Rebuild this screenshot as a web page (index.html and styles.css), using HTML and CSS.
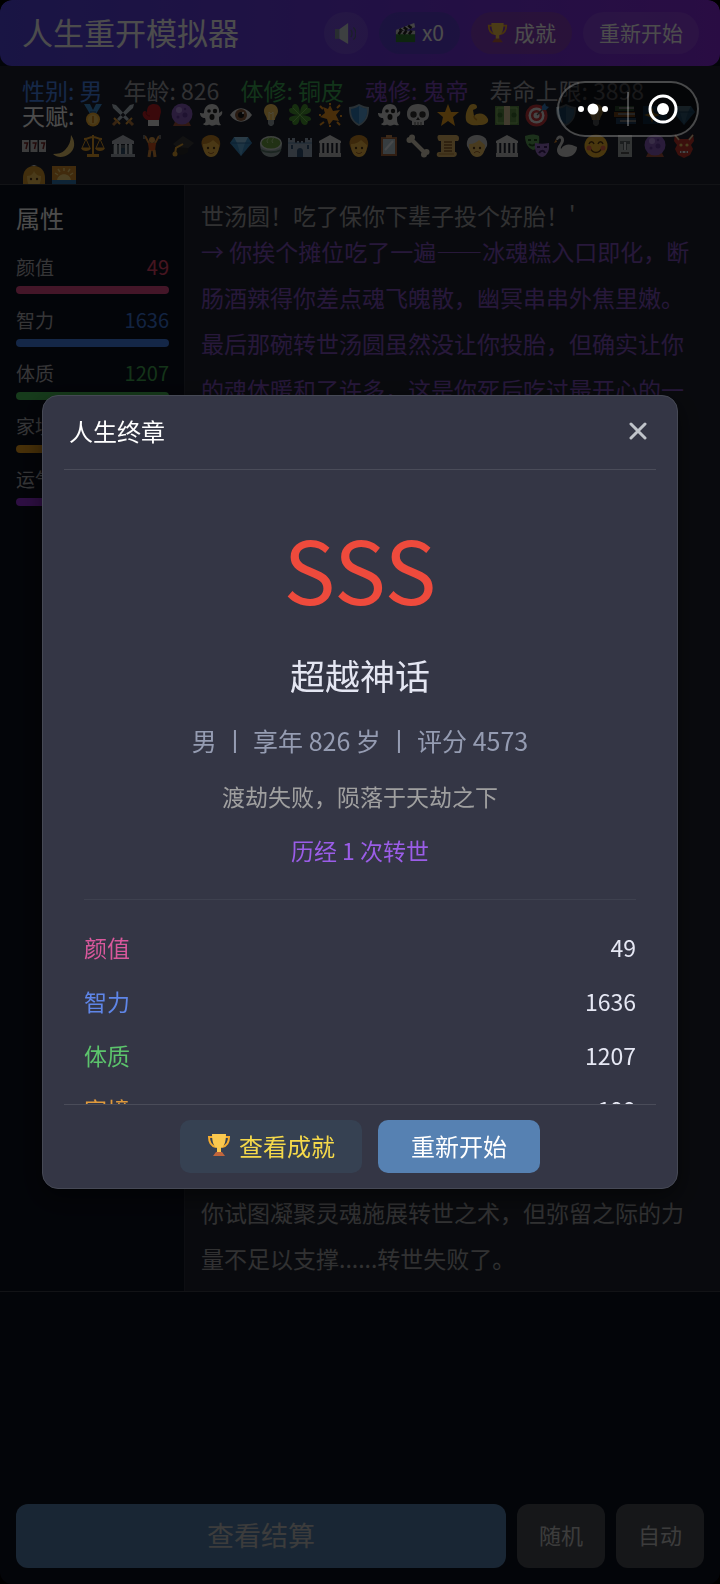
FILE: index.html
```
<!DOCTYPE html>
<html lang="zh-CN">
<head>
  <meta charset="UTF-8">
  <meta name="viewport" content="width=device-width, initial-scale=1.0">
  <title>人生重开模拟器</title>
  <link rel="stylesheet" href="styles.css">
</head>
<body>
  <!-- icon set -->
  <svg class="sprite" aria-hidden="true">
    <symbol id="medal" viewBox="0 0 24 24"><path d="M3 1h6l3 6 3-6h6l-6 10H9z" fill="#3f8fd6"/><path d="M9 8h6v3H9z" fill="#2d6ca8"/><circle cx="12" cy="16.500" r="7" fill="#f9b233"/><circle cx="12" cy="16.500" r="5" fill="#fcc95a"/><path d="M11 13h2v7h-2z" fill="#d88a1c"/></symbol>
    <symbol id="swords" viewBox="0 0 24 24"><path d="M1 1l4 1 13 14-2 2L2 5zM23 1l-4 1L6 16l2 2L22 5z" fill="#b9c6cf"/><path d="M3 15l6 6M21 15l-6 6" stroke="#e9a23b" stroke-width="2"/><path d="M6 18l-4 4M18 18l4 4" stroke="#b97a3c" stroke-width="3"/></symbol>
    <symbol id="glove" viewBox="0 0 24 24"><path d="M7 17C1 14 2 8 5 8l2 1c0-6 3-8 7-8 5 0 7 3 7 8l-2 8z" fill="#c21f26"/><path d="M8 17h11v6H8z" fill="#e6e6e6"/><path d="M6 9c0 3 2 4 4 4" stroke="#8c1218" fill="none"/></symbol>
    <symbol id="ball" viewBox="0 0 24 24"><path d="M5 19h14l2 4H3z" fill="#a8553c"/><circle cx="12" cy="11" r="10.500" fill="#8d5fc4"/><circle cx="9" cy="7" r="3" fill="#b995e8"/><circle cx="15" cy="12" r="2.500" fill="#6a3fa0"/><circle cx="8" cy="14" r="1.500" fill="#6a3fa0"/><circle cx="15" cy="6" r="1.300" fill="#6a3fa0"/></symbol>
    <symbol id="ghost" viewBox="0 0 24 24"><path d="M5 10C5 4 9 1 13 1c5 0 8 4 7 9l3-2c1 3-1 5-3 6 0 4 0 6 2 8-3 1-4-1-6 0s-4 1-5 0-4 2-7-1c3-1 3-3 2-6-3 0-5-2-5-5 2 0 3 1 4 0z" fill="#dcdcdc"/><circle cx="10" cy="8" r="1.800" fill="#222"/><circle cx="16" cy="8" r="2.200" fill="#222"/><ellipse cx="13" cy="14" rx="2.500" ry="3" fill="#222"/></symbol>
    <symbol id="eye" viewBox="0 0 24 24"><path d="M1 12c6-9 16-9 22 0-6 9-16 9-22 0z" fill="#e4e4e4"/><circle cx="12" cy="12" r="6" fill="#8a5a3c"/><circle cx="12" cy="12" r="3" fill="#181818"/><circle cx="14" cy="10" r="1" fill="#fff"/></symbol>
    <symbol id="bulb" viewBox="0 0 24 24"><path d="M12 1c5 0 7 4 7 7 0 4-3 5-3 9H8c0-4-3-5-3-9 0-3 2-7 7-7z" fill="#fbc85c"/><path d="M10 17V9l2 2 2-2v8" stroke="#fff0b8" fill="none"/><path d="M9 17h6v4l-2 2h-2l-2-2z" fill="#9aa4aa"/></symbol>
    <symbol id="clover" viewBox="0 0 24 24"><path d="M12 12C8 12 1 11 1 7c0-2 3-2 3-2s0-4 3-4c4 0 5 7 5 11zM12 12c0-4 1-11 5-11 3 0 3 4 3 4s3 0 3 2c0 4-7 5-11 5zM12 12c0 4-1 10-5 10-3 0-3-4-3-4s-3 0-3-2c0-3 7-4 11-4zM12 12c4 0 11 1 11 4 0 2-3 2-3 2s0 4-3 4c-4 0-5-6-5-10z" fill="#4c9a34"/><path d="M5 5l14 14M19 5L5 19" stroke="#7cc25a"/></symbol>
    <symbol id="glow" viewBox="0 0 24 24"><path d="M12 2l3 6 7-1-4 5 3 6-6-1-4 5-2-6-7-2 5-4-2-6 5 2z" fill="#f59a23"/><path d="M2 3l3 3M22 2l-3 3M2 22l4-3M22 22l-3-3M12 0v2M1 12h2M12 22v2M22 13h2" stroke="#f59a23" stroke-width="2"/></symbol>
    <symbol id="shield" viewBox="0 0 24 24"><path d="M12 1c4 2 7 3 10 3 0 9-2 15-10 19C4 19 2 13 2 4c3 0 6-1 10-3z" fill="#8ba3b3"/><path d="M12 3c3 2 5 2 8 3 0 7-2 12-8 15C6 18 4 13 4 6c3-1 5-1 8-3z" fill="#2f7fc0"/><path d="M12 3c3 2 5 2 8 3 0 7-2 12-8 15z" fill="#5ca5de"/></symbol>
    <symbol id="skull" viewBox="0 0 24 24"><path d="M12 1c7 0 11 4 11 10 0 4-2 6-5 7v4H6v-4c-3-1-5-3-5-7C1 5 5 1 12 1z" fill="#d4d4d4"/><circle cx="7.500" cy="11.500" r="3.200" fill="#333"/><circle cx="16.500" cy="11.500" r="3.200" fill="#333"/><path d="M12 14l-2 3h4z" fill="#333"/><path d="M9 19v4M12 19v4M15 19v4" stroke="#555"/></symbol>
    <symbol id="star" viewBox="0 0 24 24"><path d="M12 1l3 8h8l-6 5 2 9-7-5-7 5 2-9-6-5h8z" fill="#f7a823"/></symbol>
    <symbol id="arm" viewBox="0 0 24 24"><path d="M5 2c3-2 7-1 7 2 0 2-3 2-4 3l1 6c4-4 11-3 14 3 1 4-3 6-9 6-7 1-12-1-13-5C0 11 2 6 5 2z" fill="#f6bd3c"/><path d="M9 13c0 2 1 3 3 4" stroke="#c98a1e" fill="none" stroke-width="1.500"/></symbol>
    <symbol id="cash" viewBox="0 0 24 24"><path d="M0 3h24v19H0z" fill="#5f8f48"/><path d="M2 5h20v15H2z" fill="none" stroke="#8fc06b"/><path d="M9 3h6v19H9z" fill="#d9c79a"/><circle cx="5" cy="12" r="2.500" fill="#3f6e30"/><circle cx="19" cy="12" r="2.500" fill="#3f6e30"/></symbol>
    <symbol id="target" viewBox="0 0 24 24"><circle cx="11.500" cy="12.500" r="11" fill="#c9383c"/><circle cx="11.500" cy="12.500" r="8" fill="#ececec"/><circle cx="11.500" cy="12.500" r="5.500" fill="#c9383c"/><circle cx="11.500" cy="12.500" r="3" fill="#ececec"/><path d="M12 12l8-8" stroke="#555" stroke-width="1.500"/><path d="M17 3l3-3 1 3 3 1-3 3h-4z" fill="#3b82c8"/></symbol>
    <symbol id="books" viewBox="0 0 24 24"><path d="M2 3h19v5H2z" fill="#4f8f5a"/><path d="M1 9h21v5H1z" fill="#d9822b"/><path d="M3 15h20v6H3z" fill="#3f78b5"/><path d="M6 5h15M5 11h17M7 18h16" stroke="#e6e6e6" stroke-width="2"/></symbol>
    <symbol id="spark" viewBox="0 0 24 24"><path d="M0 3h24v18H0z" fill="#1f4f80"/><path d="M9 4l2 6 6 2-6 2-2 6-2-6-6-2 6-2zM19 3l1 3 3 1-3 1-1 3-1-3-3-1 3-1z" fill="#f7b733"/></symbol>
    <symbol id="gem" viewBox="0 0 24 24"><path d="M5 3h14l4 6-11 13L1 9z" fill="#3f8fc9"/><path d="M5 3h14l-3 6H8z" fill="#8cc6ec"/><path d="M8 9h8l-4 13z" fill="#62aee0"/><path d="M1 9h22" stroke="#2a6ea6"/></symbol>
    <symbol id="slots" viewBox="0 0 24 24"><path d="M0 6h7v12H0zM8.500 6h7v12h-7zM17 6h7v12h-7z" fill="#c8c8c8"/><path d="M2 9h3.500L4 15M10.500 9H14l-1.500 6M19 9h3.500L21 15" stroke="#722" stroke-width="1.500" fill="none"/></symbol>
    <symbol id="moon" viewBox="0 0 24 24"><path d="M19 1c5 7 4 15-2 19-5 4-12 4-16 0 5 0 9-1 12-4 4-4 6-9 6-15z" fill="#f6cf72"/></symbol>
    <symbol id="scales" viewBox="0 0 24 24"><path d="M12 1v20M3 5c5 0 5-2 9-2s4 2 9 2" stroke="#e8a02c" stroke-width="2" fill="none"/><path d="M5 5l-4 9h8zM19 5l-4 9h8z" fill="none" stroke="#e8a02c"/><path d="M0 14h10c-1 4-9 4-10 0zM14 14h10c-1 4-9 4-10 0zM6 20h12v3H6z" fill="#e8a02c"/></symbol>
    <symbol id="bank" viewBox="0 0 24 24"><path d="M12 1l11 6v3H1V7z" fill="#b4bac2"/><path d="M2 11h20v9H2z" fill="#59616c"/><path d="M3 10h3v10H3zM8 10h2v10H8zM14 10h2v10h-2zM18 10h3v10h-3z" fill="#c3c9d0"/><path d="M10 14h4v6h-4z" fill="#32506e"/><path d="M0 20h24v3H0z" fill="#a4abb4"/></symbol>
    <symbol id="temple" viewBox="0 0 24 24"><path d="M12 1l11 6v2H1V7z" fill="#d6d6d6"/><path d="M3 9v11M7.500 9v11M12 9v11M16.500 9v11M21 9v11" stroke="#d0d0d0" stroke-width="2.500"/><path d="M1 19h22v4H1z" fill="#c4c4c4"/></symbol>
    <symbol id="lifter" viewBox="0 0 24 24"><path d="M5 2l5 9M19 2l-5 9" stroke="#d88b3a" stroke-width="2"/><path d="M4 1v4M20 1v4" stroke="#777" stroke-width="2"/><circle cx="12" cy="6" r="3" fill="#e5a04a"/><path d="M8 9h8l-1 8H9z" fill="#d9541e"/><path d="M10 16l-1 7M14 16l1 7" stroke="#d88b3a" stroke-width="3"/></symbol>
    <symbol id="cap" viewBox="0 0 24 24"><path d="M13 2l11 7-10 9L3 10z" fill="#3e3e3e"/><path d="M7 13v6c4 3 8 2 11-1v-4" fill="#292929"/><path d="M13 10l-7 4-1 6" stroke="#e4a435" stroke-width="2" fill="none"/><circle cx="5" cy="20" r="2.500" fill="#e4a435"/></symbol>
    <symbol id="face" viewBox="0 0 24 24"><path d="M12 1c7 0 10 5 9 11l-2 5H5l-2-5C1 6 5 1 12 1z" fill="#c98526"/><path d="M4 10c5 0 8-2 10-4 2 2 4 3 6 5 0 8-3 12-8 12S4 18 4 10z" fill="#f7bd48"/><circle cx="9" cy="14" r="1.200" fill="#5a3a18"/><circle cx="15" cy="14" r="1.200" fill="#5a3a18"/><path d="M9 18c2 2 4 2 6 0" stroke="#9a5c20" fill="none"/></symbol>
    <symbol id="tea" viewBox="0 0 24 24"><path d="M1 9h22c0 9-4 14-11 14S1 18 1 9z" fill="#9fb0b0"/><ellipse cx="12" cy="9" rx="11" ry="7" fill="#d4dcd6"/><ellipse cx="12" cy="9" rx="9.500" ry="5.500" fill="#6fa544"/><path d="M9 9c-3-3 2-4 0-7M14 9c-3-3 2-4 0-7" stroke="#b6d89a" fill="none"/><path d="M2 16c5 3 15 3 20 0" stroke="#5d7c70" stroke-width="2" fill="none"/></symbol>
    <symbol id="castle" viewBox="0 0 24 24"><path d="M0 4h2v2h2V4h3v5h2V7h2v2h2V7h2v2h2V4h3v2h2V4h2v19H0z" fill="#9fb0c2"/><path d="M9 23v-6c0-4 6-4 6 0v6zM3 11h2v4H3zM19 11h2v4h-2z" fill="#33557a"/><path d="M0 9h24" stroke="#5b87b0"/></symbol>
    <symbol id="mirror" viewBox="0 0 24 24"><path d="M4 3h16v19H4z" fill="#a5673f"/><path d="M6 5h12v15H6z" fill="#b9ccd6"/><path d="M8 16l8-9" stroke="#eef6fa" stroke-width="2"/><path d="M9 1h6v3H9z" fill="#c98a52"/></symbol>
    <symbol id="bone" viewBox="0 0 24 24"><path d="M5 5l14 14" stroke="#e0d8c4" stroke-width="4"/><circle cx="3.500" cy="6" r="3" fill="#e0d8c4"/><circle cx="6" cy="3.500" r="3" fill="#e0d8c4"/><circle cx="18" cy="20.500" r="3" fill="#e0d8c4"/><circle cx="20.500" cy="18" r="3" fill="#e0d8c4"/></symbol>
    <symbol id="scroll" viewBox="0 0 24 24"><path d="M3 1h17c3 0 4 4 2 6h-3v11h1c2 2 0 5-2 5H3c-3 0-3-5 0-5h2V7H3C1 5 1 1 3 1z" fill="#e3b86a"/><path d="M8 8h8M8 11h8M8 14h8M8 17h8" stroke="#8a5c28" stroke-width="1.500"/><path d="M3 20h15" stroke="#b5843c"/></symbol>
    <symbol id="elder" viewBox="0 0 24 24"><path d="M12 1c8 0 11 5 10 11l-3 5H5l-3-5C1 6 4 1 12 1z" fill="#cdcdcd"/><path d="M4 10c5 0 8-2 10-4 2 2 4 3 6 5 0 8-3 12-8 12S4 18 4 10z" fill="#f3c566"/><circle cx="9" cy="14" r="1.200" fill="#5a3a18"/><circle cx="15" cy="14" r="1.200" fill="#5a3a18"/><path d="M9 19c2-2 4-2 6 0" stroke="#9a5c20" fill="none"/></symbol>
    <symbol id="masks" viewBox="0 0 24 24"><path d="M0 2c5-2 10-2 14 0 1 7-1 13-6 14C3 14 0 9 0 2z" fill="#5fa55a"/><path d="M3 6h3M9 6h3M4 10c2 2 5 2 6 0" stroke="#1e4a20" stroke-width="2" fill="none"/><path d="M10 9c5 1 9 1 14 0 1 7-2 13-7 14-5-1-8-7-7-14z" fill="#9a6fc8"/><path d="M12 13h3M19 13h3M14 19c2-3 5-3 6 0" stroke="#3c2060" stroke-width="2" fill="none"/></symbol>
    <symbol id="swan" viewBox="0 0 24 24"><path d="M2 6c0-6 8-6 8 0 0 4-4 6-3 9 3-5 8-5 11-4l5 2c0 6-5 10-11 10-6 0-9-3-9-7 0-4 4-7 4-10 0-2-2-2-3 0z" fill="#d6d6d6"/><path d="M2 5l-2 4 3-1z" fill="#e08a2c"/></symbol>
    <symbol id="smile" viewBox="0 0 24 24"><circle cx="12" cy="12" r="11.500" fill="#f5b92f"/><path d="M5 10c1-3 4-3 5 0M14 10c1-3 4-3 5 0M6 14c3 6 9 6 12 0" stroke="#5b3a12" stroke-width="1.500" fill="none"/><circle cx="5" cy="14" r="2.500" fill="#ef6b4a"/><circle cx="19" cy="14" r="2.500" fill="#ef6b4a"/></symbol>
    <symbol id="moai" viewBox="0 0 24 24"><path d="M5 1h14v22H5z" fill="#a9adb0"/><path d="M7 7h10v3h-3v6h-4v-6H7z" fill="#5f6468"/><path d="M11 8h2v8h-2z" fill="#c8ccd0"/><path d="M8 19h8" stroke="#555" stroke-width="2"/></symbol>
    <symbol id="ogre" viewBox="0 0 24 24"><path d="M3 0l5 5h8l5-5 1 7-3 4 2 4-3 6-6 3-6-3-3-6 2-4-3-4z" fill="#c5362c"/><path d="M3 1l4 5M21 1l-4 5" stroke="#ead9a8" stroke-width="1.500"/><circle cx="9" cy="11" r="1.600" fill="#f3d46a"/><circle cx="15" cy="11" r="1.600" fill="#f3d46a"/><path d="M8 17h8v2H8z" fill="#f0f0f0"/><path d="M10 17v2M14 17v2" stroke="#611"/></symbol>
    <symbol id="lady" viewBox="0 0 24 24"><path d="M12 1c7 0 11 5 11 12v11H1V13C1 6 5 1 12 1z" fill="#d99a2e"/><path d="M5 11c5 0 6-3 7-5 1 2 3 5 7 5 0 8-3 13-7 13S5 19 5 11z" fill="#f7c558"/><circle cx="9" cy="14" r="1.200" fill="#5a3a18"/><circle cx="15" cy="14" r="1.200" fill="#5a3a18"/><path d="M9 1l3-1 3 1z" fill="#eee"/></symbol>
    <symbol id="sunrise" viewBox="0 0 24 24"><path d="M0 1h24v15H0z" fill="#d98f2c"/><path d="M5 16c0-9 14-9 14 0z" fill="#fbd777"/><path d="M12 3v3M3 8l3 2M21 8l-3 2M6 4l2 3M18 4l-2 3" stroke="#fbd777" stroke-width="1.500"/><path d="M0 15h24v9H0z" fill="#2f78b5"/></symbol>
    <symbol id="trophy" viewBox="0 0 24 24"><path d="M6 4H2c0 6 2 9 7 10M18 4h4c0 6-2 9-7 10" stroke="#f5ac2e" stroke-width="2" fill="none"/><path d="M5 1h14c0 8-2 13-5 14v4h-4v-4C7 14 5 9 5 1z" fill="#fbc94f"/><path d="M9 19h6l3 4H6z" fill="#c0653c"/></symbol>
    <symbol id="clapper" viewBox="0 0 24 24"><path d="M1 10h22v13H1z" fill="#2f7d32"/><path d="M1 9L22 1l1 5L3 12z" fill="#e4e4e4"/><path d="M5 8l4 3M10 6l4 3M15 4l4 3" stroke="#222" stroke-width="3"/><path d="M1 10h22v4H1z" fill="#cfcfcf"/><path d="M4 14l3-4M10 14l3-4M16 14l3-4" stroke="#222" stroke-width="3"/></symbol>
    <symbol id="sound" viewBox="0 0 24 24"><path d="M0 7h5v11H0z" fill="#8798a0"/><path d="M5 7l10-7v24L5 18z" fill="#cdd6da"/><path d="M18 8c2 2 2 6 0 8M21 5c4 4 4 10 0 14" stroke="#596a86" stroke-width="1.500" fill="none"/></symbol>
  </svg>

  <div class="app">
    <header class="topbar">
      <h1>人生重开模拟器</h1>
      <div class="topbar-actions">
        <button class="pill round" aria-label="声音"><svg class="icon"><use href="#sound"/></svg></button>
        <button class="pill blue"><svg class="icon"><use href="#clapper"/></svg>x0</button>
        <button class="pill gold"><svg class="icon"><use href="#trophy"/></svg>成就</button>
        <button class="pill">重新开始</button>
      </div>
    </header>

    <section class="status">
      <div class="status-line">
        <span class="c-blue">性别: 男</span>
        <span>年龄: 826</span>
        <span class="c-green">体修: 铜皮</span>
        <span class="c-purple">魂修: 鬼帝</span>
        <span>寿命上限: 3898</span>
      </div>
      <div class="talents">
        <span class="talents-label">天赋:</span>
        <svg class="icon"><use href="#medal"/></svg>
        <svg class="icon"><use href="#swords"/></svg>
        <svg class="icon"><use href="#glove"/></svg>
        <svg class="icon"><use href="#ball"/></svg>
        <svg class="icon"><use href="#ghost"/></svg>
        <svg class="icon"><use href="#eye"/></svg>
        <svg class="icon"><use href="#bulb"/></svg>
        <svg class="icon"><use href="#clover"/></svg>
        <svg class="icon"><use href="#glow"/></svg>
        <svg class="icon"><use href="#shield"/></svg>
        <svg class="icon"><use href="#ghost"/></svg>
        <svg class="icon"><use href="#skull"/></svg>
        <svg class="icon"><use href="#star"/></svg>
        <svg class="icon"><use href="#arm"/></svg>
        <svg class="icon"><use href="#cash"/></svg>
        <svg class="icon"><use href="#target"/></svg>
        <svg class="icon"><use href="#shield"/></svg>
        <svg class="icon"><use href="#bulb"/></svg>
        <svg class="icon"><use href="#books"/></svg>
        <svg class="icon"><use href="#spark"/></svg>
        <svg class="icon"><use href="#gem"/></svg>

        <svg class="icon"><use href="#slots"/></svg>
        <svg class="icon"><use href="#moon"/></svg>
        <svg class="icon"><use href="#scales"/></svg>
        <svg class="icon"><use href="#bank"/></svg>
        <svg class="icon"><use href="#lifter"/></svg>
        <svg class="icon"><use href="#cap"/></svg>
        <svg class="icon"><use href="#face"/></svg>
        <svg class="icon"><use href="#gem"/></svg>
        <svg class="icon"><use href="#tea"/></svg>
        <svg class="icon"><use href="#castle"/></svg>
        <svg class="icon"><use href="#temple"/></svg>
        <svg class="icon"><use href="#face"/></svg>
        <svg class="icon"><use href="#mirror"/></svg>
        <svg class="icon"><use href="#bone"/></svg>
        <svg class="icon"><use href="#scroll"/></svg>
        <svg class="icon"><use href="#elder"/></svg>
        <svg class="icon"><use href="#temple"/></svg>
        <svg class="icon"><use href="#masks"/></svg>
        <svg class="icon"><use href="#swan"/></svg>
        <svg class="icon"><use href="#smile"/></svg>
        <svg class="icon"><use href="#moai"/></svg>
        <svg class="icon"><use href="#ball"/></svg>
        <svg class="icon"><use href="#ogre"/></svg>

        <svg class="icon"><use href="#lady"/></svg>
        <svg class="icon"><use href="#sunrise"/></svg>
      </div>
    </section>

    <main class="play">
      <aside class="attrs">
        <h2>属性</h2>
        <div class="attr pink"><span>颜值</span><b>49</b><i></i></div>
        <div class="attr blue"><span>智力</span><b>1636</b><i></i></div>
        <div class="attr green"><span>体质</span><b>1207</b><i></i></div>
        <div class="attr orange"><span>家境</span><b></b><i></i></div>
        <div class="attr purple"><span>运气</span><b></b><i></i></div>
      </aside>
      <div class="log">
        <div class="log-top">
          <p>世汤圆！吃了保你下辈子投个好胎！'</p>
          <p class="reply">→ 你挨个摊位吃了一遍——冰魂糕入口即化，断肠酒辣得你差点魂飞魄散，幽冥串串外焦里嫩。最后那碗转世汤圆虽然没让你投胎，但确实让你的魂体暖和了许多，这是你死后吃过最开心的一</p>
        </div>
        <p>你试图凝聚灵魂施展转世之术，但弥留之际的力量不足以支撑......转世失败了。</p>
      </div>
    </main>

    <footer class="actions">
      <button class="btn-main">查看结算</button>
      <button class="btn-side">随机</button>
      <button class="btn-side">自动</button>
    </footer>
  </div>

  <div class="overlay">
    <div class="modal" role="dialog" aria-labelledby="modal-title">
      <div class="modal-head">
        <h2 id="modal-title">人生终章</h2>
        <button class="close" aria-label="关闭">
          <svg viewBox="0 0 18 18"><path d="M2 2l14 14M16 2L2 16"/></svg>
        </button>
      </div>
      <div class="modal-body">
        <div class="grade">SSS</div>
        <div class="rank">超越神话</div>
        <div class="summary">男 丨 享年 826 岁 丨 评分 4573</div>
        <div class="cause">渡劫失败，陨落于天劫之下</div>
        <div class="rebirth">历经 1 次转世</div>
        <dl class="results">
          <div class="pink"><dt>颜值</dt><dd>49</dd></div>
          <div class="blue"><dt>智力</dt><dd>1636</dd></div>
          <div class="green"><dt>体质</dt><dd>1207</dd></div>
          <div class="orange"><dt>家境</dt><dd>199</dd></div>
        </dl>
      </div>
      <div class="modal-foot">
        <button class="btn-trophy"><svg class="icon"><use href="#trophy"/></svg>查看成就</button>
        <button class="btn-restart">重新开始</button>
      </div>
    </div>
  </div>

  <!-- mini program capsule -->
  <div class="capsule">
    <button aria-label="更多"><svg width="32" height="32" viewBox="0 0 32 32"><circle cx="4" cy="16" r="3"/><circle cx="16" cy="16" r="5.500"/><circle cx="28" cy="16" r="3"/></svg></button>
    <button aria-label="退出"><svg width="32" height="32" viewBox="0 0 32 32"><circle class="ring" cx="16" cy="16" r="13"/><circle cx="16" cy="16" r="6"/></svg></button>
  </div>
</body>
</html>
```
FILE: styles.css
```
* {
  box-sizing: border-box;
}

body {
  margin: 0;
  background: #000;
  color: #fff;
  font-family: "Noto Sans CJK SC", sans-serif;
  font-size: 23px;
}

h1, h2, p, dl, dd {
  margin: 0;
  font-weight: 400;
}

button {
  border: 0;
  color: inherit;
  font-family: inherit;
  cursor: pointer;
}

.sprite {
  position: absolute;
  width: 0;
  height: 0;
}

.icon {
  width: 24px;
  height: 24px;
  flex: none;
}

.app {
  height: 100vh;
  display: flex;
  flex-direction: column;
  background: #0d111f;
  border-radius: 12px;
  overflow: hidden;
}

/* header */
.topbar {
  height: 66px;
  flex: none;
  display: flex;
  align-items: center;
  justify-content: space-between;
  padding: 0 21px 0 22px;
  background: linear-gradient(90deg, #5546e5, #8a2be2);
  border-radius: 12px;
}

.topbar h1 {
  padding-bottom: 4px;
  font-size: 31px;
}

.topbar-actions {
  display: flex;
  gap: 11px;
}

.pill {
  height: 42px;
  display: flex;
  align-items: center;
  gap: 6px;
  padding: 0 16px 2px;
  border-radius: 21px;
  background: rgba(255, 255, 255, .1);
  font-size: 21px;
}

.pill .icon {
  width: 21px;
  height: 21px;
}

.pill.round {
  width: 44px;
  padding: 0 11px;
}

.pill.blue {
  background: rgba(30, 90, 160, .24);
}

.pill.gold {
  background: rgba(190, 110, 60, .2);
}

/* status and talents */
.status {
  height: 119px;
  flex: none;
  padding: 11px 18px 0 22px;
  background: #20242f;
  border-bottom: 1px solid #3c404c;
  overflow: hidden;
}

.status-line {
  display: flex;
  gap: 21px;
  line-height: 26px;
  white-space: nowrap;
  color: #a4a4ac;
}

.status-line .c-blue { color: #4a88f0; }
.status-line .c-green { color: #3fb058; }
.status-line .c-purple { color: #8148c4; }

.talents {
  display: grid;
  grid-template-columns: repeat(23, 1fr);
  grid-auto-rows: 24px;
  row-gap: 7px;
}

.talents-label {
  grid-column: span 2;
  line-height: 24px;
}

/* main area */
.play {
  height: 1107px;
  flex: 0 1 auto;
  display: flex;
  border-bottom: 1px solid #3c404c;
}

.attrs {
  width: 185px;
  flex: none;
  padding: 13px 15px 0 16px;
  border-right: 1px solid #2c303c;
}

.attrs h2 {
  margin-bottom: 13px;
  font-size: 24px;
  line-height: 40px;
}

.attr {
  display: grid;
  grid-template-columns: auto auto;
  justify-content: space-between;
  align-content: end;
  row-gap: 4px;
  height: 43px;
  margin-bottom: 10px;
  color: #b4b4ba;
  font-size: 19px;
  line-height: 30px;
}

.attr b {
  font-size: 20px;
  font-weight: 400;
}

.attr i {
  grid-column: span 2;
  height: 8px;
  border-radius: 4px;
}

.attr.pink i { background: #e44a88; }
.attr.pink b { color: #e8486c; }
.attr.blue i { background: #4482ee; }
.attr.blue b { color: #3f78dc; }
.attr.green i { background: #4cc55c; }
.attr.green b { color: #44b054; }
.attr.orange i { background: #f0a21e; }
.attr.purple i { background: #9a32e0; }

.log {
  flex: 1;
  display: flex;
  flex-direction: column;
  justify-content: space-between;
  padding: 7px 16px 10px;
  background: #20242f;
  color: #a4a4a8;
  line-height: 46px;
}

.log-top p:first-child {
  margin-bottom: -10px;
}

.log .reply {
  color: #8250c4;
}

/* bottom buttons */
.actions {
  display: flex;
  gap: 11px;
  margin-top: auto;
  padding: 16px;
}

.btn-main,
.btn-side {
  height: 64px;
  padding: 0 0 4px;
  border-radius: 12px;
  background: #4a4e56;
  color: #c8c8c8;
  font-size: 22px;
}

.btn-main {
  flex: 1;
  background: #5681ae;
  font-size: 27px;
}

.btn-side {
  width: 88px;
}

/* ending dialog */
.overlay {
  position: fixed;
  inset: 0;
  display: flex;
  align-items: center;
  justify-content: center;
  padding: 0 42px;
  background: rgba(0, 0, 0, .7);
}

.modal {
  flex: 1;
  height: calc(50vh + 2px);
  display: flex;
  flex-direction: column;
  padding: 0 21px;
  background: #343645;
  border: 1px solid #464955;
  border-radius: 16px;
  box-shadow: 0 8px 24px rgba(0, 0, 0, .5);
}

.modal-head {
  display: flex;
  align-items: center;
  justify-content: space-between;
  height: 74px;
  flex: none;
  padding: 0 5px 4px;
  border-bottom: 1px solid #4a4c59;
}

.modal-head h2 {
  font-size: 24px;
}

.close {
  padding: 4px;
  background: none;
}

.close svg {
  display: block;
  width: 18px;
  height: 18px;
  fill: none;
  stroke: #c0c4ca;
  stroke-width: 3;
  stroke-linecap: round;
}

.modal-body {
  flex: 1;
  min-height: 0;
  padding: 35px 20px 0;
  overflow: hidden;
  text-align: center;
}

.grade {
  color: #ee4a3c;
  font-size: 87px;
  line-height: 124px;
}

.rank {
  margin-top: 16px;
  color: #e4e6f2;
  font-size: 35px;
  line-height: 60px;
}

.summary {
  margin-top: 13px;
  color: #959cb2;
  font-size: 25px;
  line-height: 44px;
}

.cause {
  margin-top: 12px;
  color: #a0a0a0;
  line-height: 44px;
}

.rebirth {
  margin-top: 10px;
  color: #9b5de8;
  line-height: 44px;
}

.results {
  margin-top: 27px;
  padding-top: 20px;
  border-top: 1px solid #3e414f;
}

.results div {
  display: flex;
  justify-content: space-between;
  line-height: 54px;
}

.results dd { color: #e6e8f4; }
.results .pink dt { color: #d9589c; }
.results .blue dt { color: #5f86e8; }
.results .green dt { color: #5cc46c; }
.results .orange dt { color: #e09a3c; }

.modal-foot {
  display: flex;
  justify-content: center;
  gap: 16px;
  flex: none;
  padding: 15px 0;
  border-top: 1px solid #4a4c59;
}

.modal-foot button {
  display: flex;
  align-items: center;
  gap: 8px;
  height: 53px;
  padding: 0 27px 3px;
  border-radius: 10px;
  font-size: 24px;
}

.modal-foot .btn-trophy {
  background: #364152;
  color: #f5d94a;
}

.modal-foot .btn-restart {
  padding: 0 33px 3px;
  background: #5681b2;
}

/* floating capsule */
.capsule {
  position: fixed;
  top: 81px;
  right: 21px;
  width: 142px;
  height: 56px;
  display: flex;
  align-items: center;
  background: rgba(0, 0, 0, .5);
  border: 2px solid rgba(255, 255, 255, .27);
  border-radius: 28px;
}

.capsule button {
  flex: 1;
  height: 34px;
  padding: 0;
  background: none;
  line-height: 0;
}

.capsule button + button {
  border-left: 2px solid rgba(255, 255, 255, .27);
}

.capsule svg {
  fill: #fff;
}

.capsule .ring {
  fill: none;
  stroke: #fff;
  stroke-width: 3;
}
```
